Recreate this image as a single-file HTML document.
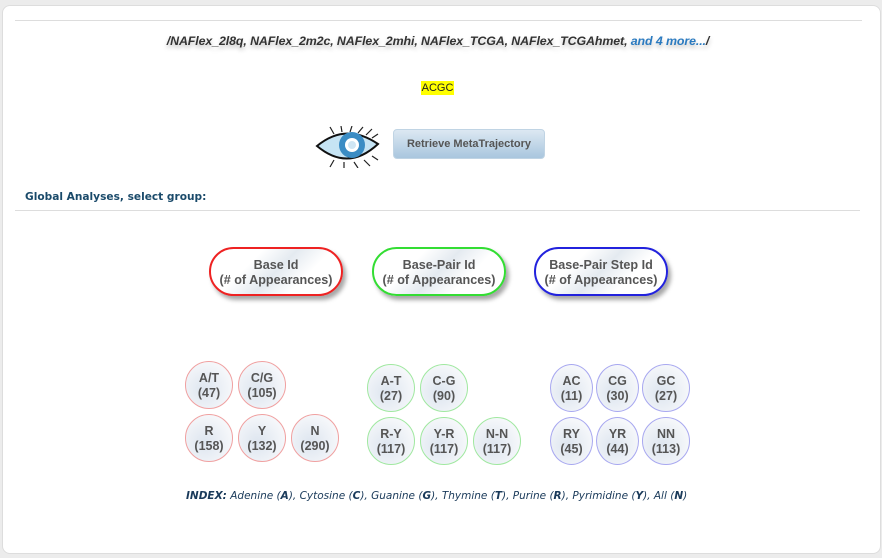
<!DOCTYPE html>
<html><head><meta charset="utf-8"><style>
body{margin:0;width:882px;height:558px;background:#ececec;font-family:"Liberation Sans",sans-serif;position:relative;overflow:hidden}
.panel{position:absolute;left:2px;top:5px;width:877px;height:547px;background:#fff;border-radius:8px;border:1px solid #ddd}
.a{position:absolute}
.hr{position:absolute;height:1px;background:#ddd}
.title{left:0;width:876px;top:34px;text-align:center;font-weight:bold;font-style:italic;font-size:12.4px;letter-spacing:-0.1px;color:#333;text-shadow:0 3px 4px rgba(0,0,0,.25)}
.title span{color:#2a7ac0}
.pill{position:absolute;border-radius:25px;border:2px solid;background:linear-gradient(135deg,#fff 30%,#e4eaf0 50%,#fff 70%);box-shadow:3px 4px 4px rgba(0,0,0,.35);text-align:center;font-weight:bold;font-size:12.6px;color:#555;line-height:15px;padding-top:9px;box-sizing:border-box;height:49px;width:134px}
.c{position:absolute;width:48px;height:48px;border-radius:50%;border:1px solid;box-sizing:border-box;background:radial-gradient(circle at 40% 60%,#dde5ef,#f5f7fa 70%);text-align:center;font-weight:bold;font-size:12.5px;color:#555;line-height:15px;padding-top:9px}
.r{border-color:#f0a0a0}.g{border-color:#a0e8a0}.b{border-color:#a8a8f0}
</style></head><body>
<div class="panel"></div>
<div class="hr" style="left:15px;top:20px;width:847px"></div>
<div class="a title">/NAFlex_2l8q, NAFlex_2m2c, NAFlex_2mhi, NAFlex_TCGA, NAFlex_TCGAhmet, <span>and 4 more...</span>/</div>
<div class="a" style="left:421px;top:81px;width:33px;height:14px;background:#ff0;font-size:11px;line-height:14px;text-align:center;color:#222">ACGC</div>
<svg class="a" style="left:314px;top:126px" width="68" height="42" viewBox="0 0 68 42">
<g stroke="#222" stroke-width="1.2"><path d="M20 8 L16 1M28 6 L27 0M36 6 L38 0M44 7 L49 1M52 9 L58 3M58 12 L64 8M20 34 L16 41M30 36 L30 42M40 36 L44 42M50 34 L56 40M58 30 L64 34"/></g>
<path d="M3 20 Q32 -4 64 18 Q34 46 3 20Z" fill="#c6e4f4" stroke="#111" stroke-width="2"/>
<circle cx="38" cy="19" r="13" fill="#3a8cc4"/><circle cx="38" cy="19" r="7" fill="#fff"/><circle cx="38" cy="19" r="4" fill="#cfe6f4"/>
</svg>
<div class="a" style="left:393px;top:129px;width:152px;height:30px;border-radius:4px;border:1px solid #c0d4e4;box-sizing:border-box;background:linear-gradient(#dce8f2,#a9c6de);font-weight:bold;font-size:11px;color:#555;text-align:center;line-height:29px">Retrieve MetaTrajectory</div>
<div class="a" style="left:25px;top:191px;font-family:'DejaVu Sans',sans-serif;font-weight:bold;font-size:10.6px;color:#1a4a6a">Global Analyses, select group:</div>
<div class="hr" style="left:15px;top:210px;width:845px"></div>
<div class="pill" style="left:209px;top:247px;border-color:#e22">Base Id<br>(# of Appearances)</div>
<div class="pill" style="left:372px;top:247px;border-color:#3d3">Base-Pair Id<br>(# of Appearances)</div>
<div class="pill" style="left:534px;top:247px;border-color:#22d">Base-Pair Step Id<br>(# of Appearances)</div>
<div class="c r" style="left:185px;top:361px">A/T<br>(47)</div>
<div class="c r" style="left:238px;top:361px">C/G<br>(105)</div>
<div class="c r" style="left:185px;top:414px">R<br>(158)</div>
<div class="c r" style="left:238px;top:414px">Y<br>(132)</div>
<div class="c r" style="left:291px;top:414px">N<br>(290)</div>
<div class="c g" style="left:367px;top:364px">A-T<br>(27)</div>
<div class="c g" style="left:420px;top:364px">C-G<br>(90)</div>
<div class="c g" style="left:367px;top:417px">R-Y<br>(117)</div>
<div class="c g" style="left:420px;top:417px">Y-R<br>(117)</div>
<div class="c g" style="left:473px;top:417px">N-N<br>(117)</div>
<div class="c b" style="left:550px;top:364px;width:43px">AC<br>(11)</div>
<div class="c b" style="left:596px;top:364px;width:43px">CG<br>(30)</div>
<div class="c b" style="left:642px;top:364px">GC<br>(27)</div>
<div class="c b" style="left:550px;top:417px;width:43px">RY<br>(45)</div>
<div class="c b" style="left:596px;top:417px;width:43px">YR<br>(44)</div>
<div class="c b" style="left:642px;top:417px">NN<br>(113)</div>
<div class="a" style="left:186px;top:490px;font-family:'DejaVu Sans',sans-serif;font-style:italic;font-size:10.5px;color:#1a3a5a"><b>INDEX:</b> Adenine (<b>A</b>), Cytosine (<b>C</b>), Guanine (<b>G</b>), Thymine (<b>T</b>), Purine (<b>R</b>), Pyrimidine (<b>Y</b>), All (<b>N</b>)</div>
</body></html>
